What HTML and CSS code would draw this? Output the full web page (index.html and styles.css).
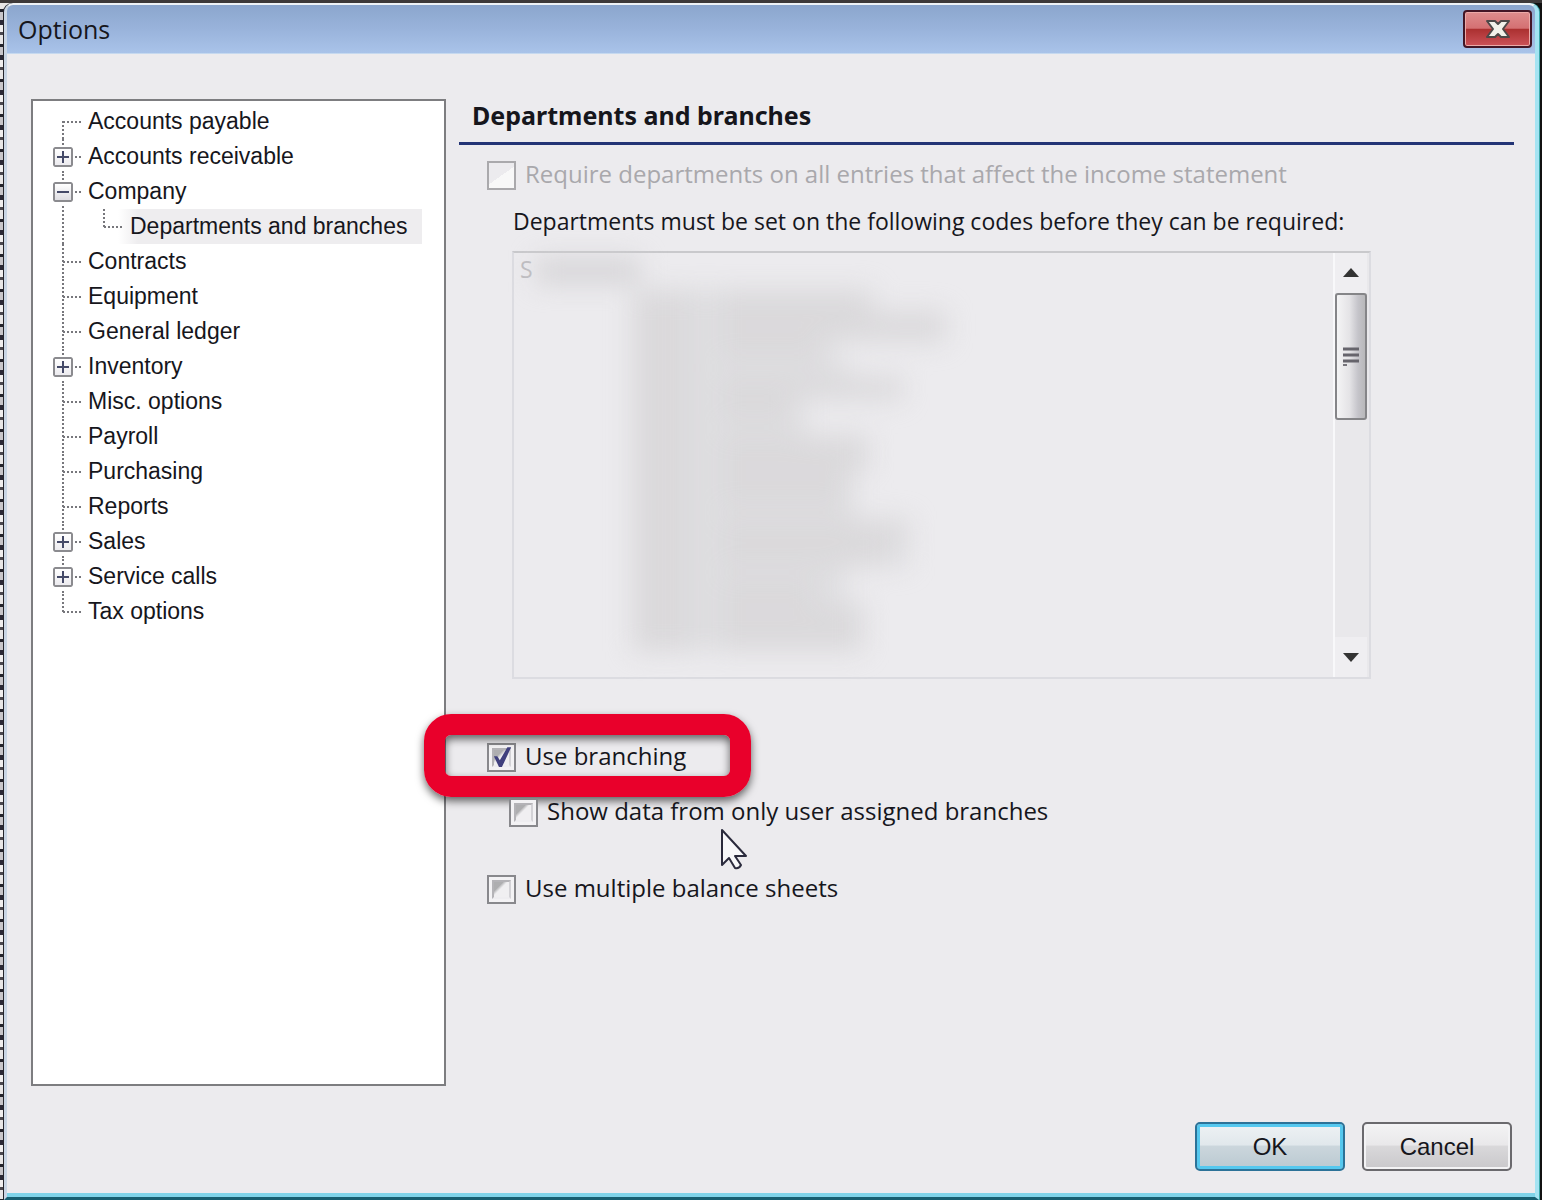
FILE: index.html
```html
<!DOCTYPE html>
<html lang="en">
<head>
    <meta charset="UTF-8">
    <meta name="viewport" content="width=device-width, initial-scale=1.0">
    <title>Options</title>
    <link rel="stylesheet" href="styles.css">
</head>
<body>
    <div class="window">
        <header class="titlebar">
            <h1>Options</h1>
            <button class="close" type="button" aria-label="Close">
                <svg width="26" height="22" viewBox="0 0 26 22">
                    <path d="M2 3h8l3 3 3-3h8l-6 8 6 8h-8l-3-3-3 3H2l6-8z" fill="#f1f1ea" stroke="#4d4848" stroke-width="2" stroke-linejoin="round"/>
                </svg>
            </button>
        </header>

        <main class="content">
            <nav class="tree" aria-label="Option categories">
                <ul>
                    <li><a href="#">Accounts payable</a></li>
                    <li><button class="toggle plus" type="button" aria-label="Expand Accounts receivable"></button><a href="#">Accounts receivable</a></li>
                    <li><button class="toggle" type="button" aria-label="Collapse Company"></button><a href="#">Company</a>
                        <ul>
                            <li><a class="selected" href="#">Departments and branches</a></li>
                        </ul>
                    </li>
                    <li><a href="#">Contracts</a></li>
                    <li><a href="#">Equipment</a></li>
                    <li><a href="#">General ledger</a></li>
                    <li><button class="toggle plus" type="button" aria-label="Expand Inventory"></button><a href="#">Inventory</a></li>
                    <li><a href="#">Misc. options</a></li>
                    <li><a href="#">Payroll</a></li>
                    <li><a href="#">Purchasing</a></li>
                    <li><a href="#">Reports</a></li>
                    <li><button class="toggle plus" type="button" aria-label="Expand Sales"></button><a href="#">Sales</a></li>
                    <li><button class="toggle plus" type="button" aria-label="Expand Service calls"></button><a href="#">Service calls</a></li>
                    <li><a href="#">Tax options</a></li>
                </ul>
            </nav>

            <section class="panel">
                <h2>Departments and branches</h2>

                <div class="option disabled">
                    <input type="checkbox" id="require" disabled>
                    <label for="require">Require departments on all entries that affect the income statement</label>
                </div>

                <p class="note">Departments must be set on the following codes before they can be required:</p>
                <div class="codes">
                    <div class="codes-list">
                        <span>S</span>
                        <svg class="redacted" width="500" height="420" viewBox="0 0 500 420" aria-hidden="true">
                            <rect x="22" y="6" width="104" height="24" opacity=".8"/>
                            <path d="M118 36h242v24h72v30H320v22H118z" opacity=".45"/>
                            <path d="M118 112h220v12h50v24H290v34h65v36h-15v48h55v48H330v34h20v50H118z" opacity=".45"/>
                            <path d="M118 39h60v360h-60z" opacity=".3"/>
                            <path d="M206 39h145v18h80v27H306v22h-100zM206 124h184v18H276v26h-70zM206 182h145v36h-20v36H206zM206 266h190v18h-25v30H206zM206 324h95v30h45v44H206z" opacity=".3"/>
                        </svg>
                    </div>
                    <div class="scrollbar">
                        <button type="button" aria-label="Scroll up">
                            <svg width="16" height="10" viewBox="0 0 16 10"><path d="M0 9 8 0l8 9z" fill="#333"/></svg>
                        </button>
                        <div class="thumb">
                            <svg width="16" height="20" viewBox="0 0 16 20">
                                <path d="M0 2h16M0 8h16M0 14h16" stroke="#66646c" stroke-width="3"/>
                                <path d="M0 18h4" stroke="#77757c" stroke-width="2"/>
                            </svg>
                        </div>
                        <button class="down" type="button" aria-label="Scroll down">
                            <svg width="16" height="10" viewBox="0 0 16 10"><path d="M0 1h16l-8 9z" fill="#333"/></svg>
                        </button>
                    </div>
                </div>

                <div class="option branching">
                    <input type="checkbox" id="branching" checked>
                    <label for="branching">Use branching</label>
                    <div class="highlight"></div>
                </div>
                <div class="option nested">
                    <input type="checkbox" id="assigned">
                    <label for="assigned">Show data from only user assigned branches</label>
                    <svg class="cursor" width="28" height="42" viewBox="0 0 28 42">
                        <path d="M2 2v35l7-7 6 10q4 1 6-3l-6-9h11z" fill="#f8f8fa" stroke="#2b2b3d" stroke-width="2" stroke-linejoin="round"/>
                    </svg>
                </div>
                <div class="option sheets">
                    <input type="checkbox" id="sheets">
                    <label for="sheets">Use multiple balance sheets</label>
                </div>
            </section>
        </main>

        <footer class="actions">
            <button class="btn default" type="button">OK</button>
            <button class="btn" type="button">Cancel</button>
        </footer>
    </div>
</body>
</html>
```

FILE: styles.css
```css
* {
    box-sizing: border-box;
}
body {
    margin: 0;
    padding: 3px 3px 0 4px;
    min-height: 100vh;
    display: flex;
    font-family: "Open Sans", "Noto Sans", sans-serif;
    font-size: 23px;
    color: #16161c;
    background:
        linear-gradient(#3d3939, #3d3939) 0 0 / 100% 3px no-repeat,
        linear-gradient(#111, #111) right / 12px 100% no-repeat,
        repeating-linear-gradient(#e8e6e6 0 9px, #23232c 9px 12px, #c8c6ca 12px 20px, #2b2936 20px 25px, #f0eeee 25px 32px, #4a474e 32px 35px);
}
ul {
    list-style: none;
    margin: 0;
    padding: 0;
}
a {
    color: inherit;
    text-decoration: none;
}
.window {
    flex: 1;
    display: flex;
    flex-direction: column;
    background: #ecebee;
    border-top: 2px solid #eef2f6;
    border-left: 3px solid #c9d5e4;
    border-right: 4px solid #a5e3f2;
    border-bottom: 3px solid #175e70;
    border-radius: 9px 9px 0 0;
    box-shadow: -1px 0 #25252b, inset 0 -4px #7fd3e8, 1px 0 #3ba5a8;
}

/* title bar */
.titlebar {
    height: 49px;
    display: flex;
    align-items: center;
    justify-content: space-between;
    padding: 0 3px 0 11px;
    border-radius: 6px 6px 0 0;
    background: linear-gradient(#8ba6cd, #99b3db 50%, #a9c3e9);
    border-bottom: 1px solid #c6d9ef;
}
.titlebar h1 {
    margin: 0;
    font-size: 25px;
    font-weight: 400;
}
.close {
    width: 69px;
    height: 38px;
    padding: 0;
    display: flex;
    align-items: center;
    justify-content: center;
    border: 2px solid #431625;
    border-radius: 4px;
    background: linear-gradient(#dd8d8d, #d47072 48%, #ab3030 50%, #cc5258);
    box-shadow: inset 0 0 0 1px #ecaaa8;
}

/* layout */
.content {
    flex: 1;
    display: grid;
    grid-template-columns: 415px 1fr;
    gap: 13px;
    padding: 45px 21px 0 24px;
}
.actions {
    display: flex;
    justify-content: flex-end;
    gap: 17px;
    padding: 36px 23px 26px;
}

/* category tree */
.tree {
    padding: 3px 22px 0 20px;
    background: #fff;
    border: 2px solid #7d7d80;
    font-family: "Liberation Sans", sans-serif;
    line-height: 35px;
}
.tree li {
    position: relative;
    padding-left: 35px;
}
.tree a {
    display: block;
}
.tree li::before {
    content: "";
    position: absolute;
    left: 10px;
    top: 17px;
    width: 19px;
    height: 2px;
    background: repeating-linear-gradient(90deg, #77777c 0 2px, transparent 2px 4px);
}
.tree li::after {
    content: "";
    position: absolute;
    left: 9px;
    top: 0;
    width: 2px;
    height: 100%;
    background: repeating-linear-gradient(#77777c 0 2px, transparent 2px 4px);
}
.tree > ul > li:first-child::after {
    top: 17px;
    height: 18px;
}
.tree li:last-child::after {
    height: 18px;
}
.tree li li {
    margin-left: 6px;
}
.tree .selected {
    margin-left: -11px;
    padding-left: 12px;
    background: linear-gradient(90deg, #fff, #eeedef 20px);
}
.toggle {
    position: absolute;
    z-index: 1;
    left: 0;
    top: 8px;
    width: 20px;
    height: 20px;
    padding: 0;
    border: 2px solid #8b8b8f;
    border-radius: 2px;
    outline: 2px solid #fff;
    background:
        linear-gradient(#454a68, #454a68) center / 12px 2px no-repeat,
        linear-gradient(#fff, #dedde2);
}
.toggle.plus {
    background:
        linear-gradient(#454a68, #454a68) center / 12px 2px no-repeat,
        linear-gradient(#454a68, #454a68) center / 2px 12px no-repeat,
        linear-gradient(#fff, #ecebef);
}

/* settings panel */
.panel h2 {
    margin: 0 0 14px;
    padding-left: 13px;
    height: 46px;
    border-bottom: 3px solid #233475;
    font-family: "Noto Sans", sans-serif;
    font-size: 25px;
    line-height: 32px;
}
.option {
    position: relative;
    display: flex;
    align-items: center;
    gap: 9px;
    height: 32px;
    margin-left: 28px;
    font-size: 24px;
    white-space: nowrap;
}
.option label {
    padding-bottom: 4px;
}
.disabled {
    color: #a9a8ac;
}
.note {
    margin: 14px 0 14px 54px;
    line-height: 32px;
    white-space: nowrap;
}
.option input {
    appearance: none;
    position: relative;
    width: 29px;
    height: 29px;
    margin: 0;
    border: 2px solid #88888c;
    background: #f3f2f4;
}
.option input::before {
    content: "";
    position: absolute;
    inset: 3px;
    border: 2px solid #b4b3b7;
    border-right-color: #d3d2d6;
    border-bottom-color: #eeedf0;
    background: linear-gradient(135deg, #aeaeb0 30%, #f0eff1 45%);
}
.option input:disabled {
    border-color: #aaa9ac;
    background: linear-gradient(145deg, #ecebee 50%, #f8f8f8 50%);
}
.option input:disabled::before {
    content: none;
}
.option input:checked::after {
    content: "";
    position: absolute;
    inset: 2px;
    background: #40407e;
    clip-path: polygon(14% 46%, 30% 46%, 42% 66%, 78% 4%, 96% 4%, 52% 98%, 38% 98%);
}
.branching {
    margin-top: 62px;
}
.nested {
    margin-top: 23px;
    margin-left: 50px;
}
.sheets {
    margin-top: 45px;
}
.highlight {
    position: absolute;
    left: -63px;
    top: -27px;
    width: 327px;
    height: 83px;
    border: 21px solid #e9002b;
    border-radius: 27px;
    box-shadow: 0 4px 8px rgba(0, 0, 0, .6), inset 0 4px 8px rgba(0, 0, 0, .6);
    pointer-events: none;
}
.cursor {
    position: absolute;
    left: 211px;
    top: 32px;
}

/* department codes */
.codes {
    display: flex;
    height: 428px;
    margin: 0 143px 0 53px;
    border: 2px solid #dcdce1;
    border-top-color: #c9c9cc;
}
.codes-list {
    flex: 1;
    position: relative;
    padding: 0 6px;
    color: #bdbcc0;
}
.redacted {
    position: absolute;
    left: 0;
    top: 0;
    fill: #cfced1;
    filter: blur(13px);
}
.scrollbar {
    width: 36px;
    display: flex;
    flex-direction: column;
    padding-right: 2px;
    border-left: 2px solid #f8f8fa;
    background: #e9e8eb;
}
.scrollbar button {
    height: 40px;
    padding: 0;
    border: 0;
    background: #efeef1;
}
.scrollbar .down {
    margin-top: auto;
}
.thumb {
    height: 127px;
    display: flex;
    align-items: center;
    justify-content: center;
    border: 2px solid #858588;
    border-radius: 3px;
    background: linear-gradient(90deg, #f4f4f5, #e4e3e6 45%, #c5c4ca 75%, #b8b8ba);
}

/* dialog buttons */
.btn {
    width: 150px;
    height: 49px;
    padding: 0;
    border: 2px solid #6a696d;
    border-radius: 5px;
    background: linear-gradient(#f3f3f4, #e9e8ea 46%, #d9d8da 50%, #c9c8cb);
    box-shadow: inset 0 0 0 2px #f3f3f5;
    color: inherit;
    font-family: "Liberation Sans", sans-serif;
    font-size: 24px;
}
.btn.default {
    border-color: #2c7298;
    background: linear-gradient(#eef2f4, #e1e8ec 46%, #cbd6dc 50%, #bac9d1);
    box-shadow: inset 0 0 0 3px #55c8ef;
}
```
